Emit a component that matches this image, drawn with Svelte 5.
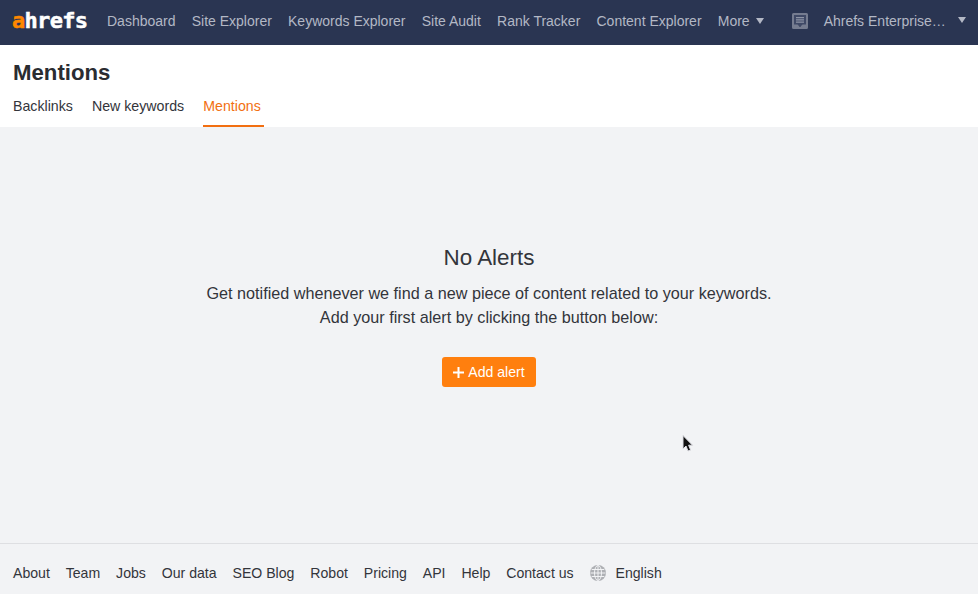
<script>
  const nav = ["Dashboard", "Site Explorer", "Keywords Explorer", "Site Audit", "Rank Tracker", "Content Explorer"];
  const footer = ["About", "Team", "Jobs", "Our data", "SEO Blog", "Robot", "Pricing", "API", "Help", "Contact us"];
</script>

<div class="page">
  <header class="topbar">
    <div class="logo"><span class="logo-a">a</span>hrefs</div>
    <nav class="nav">
      {#each nav as item}
        <a href="#top">{item}</a>
      {/each}
      <a href="#top" class="more">More <span class="caret"></span></a>
    </nav>
    <div class="account">
      <svg class="notes" width="16" height="16" viewBox="0 0 16 16">
        <rect x="1" y="1" width="14" height="12" fill="#3f4966"/>
        <path fill="#757c90" fill-rule="evenodd" d="M1.500 0h13A1.500 1.500 0 0 1 16 1.500v13a1.500 1.500 0 0 1-1.500 1.500h-13A1.500 1.500 0 0 1 0 14.500v-13A1.500 1.500 0 0 1 1.500 0zM2 2v9.500h3.500L8 14l2.500-2.500H14V2z"/>
        <path fill="#8d94a6" d="M4 4h8v1.200H4zM4 6.300h8v1.200H4zM4 8.600h8v1.200H4z"/>
      </svg>
      <span class="account-name">Ahrefs Enterprise…</span>
      <span class="caret caret-account"></span>
    </div>
  </header>

  <section class="subhead">
    <h1>Mentions</h1>
    <div class="tabs">
      <a href="#top">Backlinks</a>
      <a href="#top">New keywords</a>
      <a href="#top" class="active">Mentions</a>
    </div>
  </section>

  <main class="empty">
    <h2>No Alerts</h2>
    <p>Get notified whenever we find a new piece of content related to your keywords.<br />Add your first alert by clicking the button below:</p>
    <button type="button">
      <svg width="11" height="11" viewBox="0 0 11 11"><path fill="#fff" d="M4.500 0h2v4.500H11v2H6.500V11h-2V6.500H0v-2h4.500z"/></svg>
      Add alert
    </button>
  </main>

  <footer class="footer">
    {#each footer as item}
      <a href="#top">{item}</a>
    {/each}
    <span class="lang">
      <svg width="16" height="16" viewBox="0 0 16 16" fill="none" stroke="#f2f3f5" stroke-width="1">
        <circle cx="8" cy="8" r="8" fill="#aeb0b4" stroke="none"/>
        <ellipse cx="8" cy="8" rx="3.500" ry="7.500"/>
        <path d="M8 .5v15M.5 8h15M1.700 4.500h12.600M1.700 11.500h12.600"/>
      </svg>
      English
    </span>
  </footer>

  <svg class="cursor" width="14" height="20" viewBox="0 0 14 20">
    <path fill="#111" stroke="#dcdce2" stroke-width="1" d="M2 1.500v13.500l3-3 2 5 2.600-1-2-4.800H11.500z"/>
  </svg>
</div>

<style>
  :global(body) {
    background: #f2f3f5;
  }

  .page {
    position: relative;
    display: flex;
    flex-direction: column;
    height: 594px;
    overflow: hidden;
    font-family: "Liberation Sans", Arial, sans-serif;
    font-size: 14.1px;
    color: #33353b;
  }

  a {
    color: inherit;
    text-decoration: none;
  }

  .topbar {
    display: flex;
    align-items: center;
    flex: none;
    height: 45px;
    padding: 0 0 3px 12px;
    background: #2a3552;
    color: #b3b8c5;
    box-sizing: border-box;
    font-size: 14px;
  }

  .logo {
    width: 95px;
    font-family: "DejaVu Sans Mono", monospace;
    font-weight: 700;
    font-size: 22px;
    letter-spacing: -0.7px;
    line-height: 1;
    color: #fff;
    -webkit-text-stroke: 0.5px currentColor;
  }

  .logo-a {
    color: #ff8800;
  }

  .nav {
    display: flex;
    gap: 16.2px;
    white-space: nowrap;
  }

  .more {
    display: flex;
    align-items: center;
    gap: 6px;
  }

  .caret {
    display: inline-block;
    width: 0;
    height: 0;
    border-left: 4.500px solid transparent;
    border-right: 4.500px solid transparent;
    border-top: 6px solid #b3b8c5;
  }

  .account {
    display: flex;
    align-items: center;
    margin-left: 28px;
    white-space: nowrap;
  }

  .account-name {
    margin-left: 16px;
  }

  .caret-account {
    margin-left: 12px;
    margin-top: -2px;
  }

  .subhead {
    flex: none;
    height: 82px;
    padding: 16px 13px 0;
    background: #fff;
    box-sizing: border-box;
  }

  h1 {
    margin: 0;
    font-size: 22.2px;
    line-height: 24px;
    font-weight: 700;
    color: #2a2c31;
  }

  .tabs {
    display: flex;
    gap: 19px;
    margin-top: 3px;
    font-size: 14.2px;
  }

  .tabs a {
    height: 39px;
    padding-top: 9px;
    line-height: 18px;
    box-sizing: border-box;
  }

  .tabs .active {
    padding-right: 3px;
    color: #f26f11;
    border-bottom: 2px solid #f26f11;
  }

  .empty {
    flex: 1;
    display: flex;
    flex-direction: column;
    align-items: center;
    text-align: center;
    padding-top: 117px;
  }

  h2 {
    margin: 0;
    font-size: 22.4px;
    font-weight: 400;
    line-height: 28px;
  }

  p {
    margin: 9px 0 0;
    font-size: 16.2px;
    line-height: 24px;
  }

  button {
    display: flex;
    align-items: center;
    gap: 4px;
    margin-top: 28px;
    height: 30px;
    padding: 0 11px;
    border: 0;
    border-radius: 3px;
    background: #ff7f0e;
    color: #fff;
    font: inherit;
  }

  .footer {
    display: flex;
    align-items: center;
    gap: 15.9px;
    flex: none;
    height: 51px;
    padding: 8px 13px 0;
    border-top: 1px solid #dedfe2;
    box-sizing: border-box;
  }

  .lang {
    display: flex;
    align-items: center;
    gap: 10px;
  }

  /* mouse pointer captured in the screenshot */
  .cursor {
    position: absolute;
    left: 681px;
    top: 434px;
  }
</style>
